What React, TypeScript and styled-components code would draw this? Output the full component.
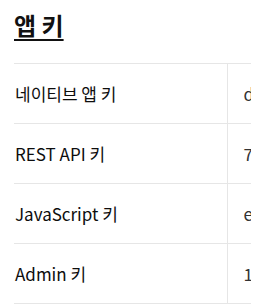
import React from "react";
import styled, { createGlobalStyle } from "styled-components";

const Global = createGlobalStyle`
  html, body { margin: 0; padding: 0; background: #fff; }
  body { font-family: "Noto Sans CJK KR", "Noto Sans", sans-serif; color: #111; }
`;

const Page = styled.div`
  padding: 0 16px 0 14px;
`;

const Title = styled.h2`
  margin: 0;
  padding-top: 7px;
  height: 56px;
  font-size: 24px;
  font-weight: 700;
  line-height: 36px;
  text-decoration: underline;
  text-underline-offset: 4px;
  text-decoration-thickness: 2px;
  color: #111;
`;

const Scroller = styled.div`
  overflow: hidden;
`;

const Table = styled.table`
  border-collapse: collapse;
  width: max-content;
`;

const Row = styled.tr`
  height: 60px;
  border-top: 1px solid #e6e6e6;
  border-bottom: 1px solid #e6e6e6;
`;

const Label = styled.th`
  width: 213px;
  padding: 0 0 0 1px;
  text-align: left;
  font-size: 17px;
  font-weight: 400;
  color: #0d0d0d;
  border-right: 1px solid #e6e6e6;
  box-sizing: border-box;
`;

const Value = styled.td`
  padding: 0 16px;
  font-size: 17px;
  font-weight: 400;
  color: #333;
  white-space: nowrap;
`;

const keys = [
  { label: "네이티브 앱 키", value: "d41c8a9f3e27b06c55f1a2e8b7d9c034" },
  { label: "REST API 키", value: "7b2e09f4c61a8d35e0f7c92b4a1d6e58" },
  { label: "JavaScript 키", value: "e93f5c1b07a24d68b2c0e9f17a35d4c6" },
  { label: "Admin 키", value: "1f6a3d8c92e05b47c1d8f0a6e3b92c75" },
];

export default function App() {
  return (
    <Page>
      <Global />
      <Title>앱 키</Title>
      <Scroller>
        <Table>
          <tbody>
            {keys.map((k) => (
              <Row key={k.label}>
                <Label>{k.label}</Label>
                <Value>{k.value}</Value>
              </Row>
            ))}
          </tbody>
        </Table>
      </Scroller>
    </Page>
  );
}
